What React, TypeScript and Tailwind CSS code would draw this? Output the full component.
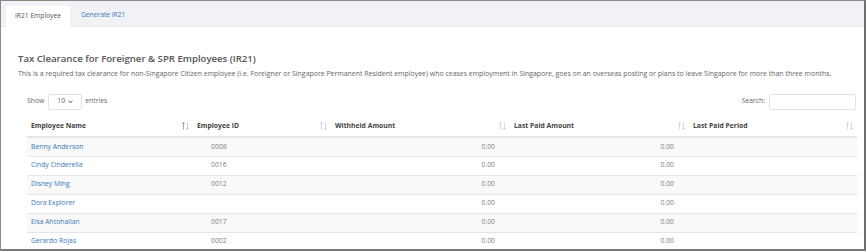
import React from "react";

const rows = [
  { name: "Benny Anderson", id: "0008" },
  { name: "Cindy Cinderella", id: "0016" },
  { name: "Disney Ming", id: "0012" },
  { name: "Dora Explorer", id: "" },
  { name: "Elsa Ahtohallan", id: "0017" },
  { name: "Gerardo Rojas", id: "0002" },
];

function SortIcon({ active }: { active?: boolean }) {
  return (
    <svg width="7" height="8" viewBox="0 0 7 8" className="shrink-0">
      <path d="M1.5 0.5 V7.5 M0.2 2 L1.5 0.5 L2.8 2" stroke={active ? "#9a9a9a" : "#d4d4d4"} strokeWidth="0.9" fill="none" />
      <path d="M5.5 0.5 V7.5 M4.2 6 L5.5 7.5 L6.8 6" stroke={active ? "#c8c8c8" : "#d4d4d4"} strokeWidth="0.9" fill="none" />
    </svg>
  );
}

export default function App() {
  return (
    <div
      className="w-[866px] h-[251px] overflow-hidden bg-white border-l border-t border-[#8a8a8a] border-r-2 border-b-2 border-r-[#6e6e6e] border-b-[#7a7a7a] flex flex-col"
      style={{ fontFamily: "'Open Sans', sans-serif" }}
    >
      <div className="h-[26px] shrink-0 bg-[#f0f2f6] border-b border-[#e6e8ec] flex items-end pl-[5px]">
        <div className="h-[21px] px-[9px] bg-white rounded-t-[2px] flex items-center text-[6.7px] text-[#555] -mb-px">
          IR21 Employee
        </div>
        <div className="h-[21px] px-[11px] flex items-center text-[6.7px] text-[#3a78b8]">
          Generate IR21
        </div>
      </div>
      <div className="pl-[17px] pr-[8px] pt-[24px]">
        <div className="text-[9.6px] font-semibold text-[#555] leading-[16px]">
          Tax Clearance for Foreigner &amp; SPR Employees (IR21)
        </div>
        <div className="text-[6.95px] text-[#666] leading-[10px] mt-[2px] whitespace-nowrap">
          This is a required tax clearance for non-Singapore Citizen employee (i.e. Foreigner or Singapore Permanent Resident employee) who ceases employment in Singapore, goes on an overseas posting or plans to leave Singapore for more than three months.
        </div>
        <div className="pl-[9px] mt-[14px]">
          <div className="flex items-center justify-between h-[17px]">
            <div className="flex items-center text-[6.8px] text-[#666]">
              <span>Show</span>
              <div className="ml-[4px] mr-[3px] w-[34px] h-[16px] border border-[#e2e2e2] rounded-[2px] flex items-center justify-between px-[8px]">
                <span>10</span>
                <svg width="5" height="4" viewBox="0 0 5 4">
                  <path d="M0.6 0.8 L2.5 2.9 L4.4 0.8" stroke="#555" strokeWidth="1" fill="none" />
                </svg>
              </div>
              <span>entries</span>
            </div>
            <div className="flex items-center text-[6.8px] text-[#666]">
              <span>Search:</span>
              <div className="ml-[4px] w-[87px] h-[16px] border border-[#e2e2e2] rounded-[2px]" />
            </div>
          </div>
          <table className="w-[830px] mt-[7px] border-collapse table-fixed text-[6.8px]">
            <colgroup>
              <col className="w-[166px]" />
              <col className="w-[138px]" />
              <col className="w-[179px]" />
              <col className="w-[179px]" />
              <col className="w-[168px]" />
            </colgroup>
            <thead>
              <tr className="h-[20px] border-b-2 border-[#e6e6e6] text-[color:#444444]">
                {["Employee Name", "Employee ID", "Withheld Amount", "Last Paid Amount", "Last Paid Period"].map((h, i) => (
                  <th key={h} className="px-[4px] pb-[1px] text-left font-bold">
                    <div className="flex items-center justify-between">
                      <span>{h}</span>
                      <SortIcon active={i === 0} />
                    </div>
                  </th>
                ))}
              </tr>
            </thead>
            <tbody>
              {rows.map((r, i) => (
                <tr key={r.name} className={i % 2 === 0 ? "h-[19px] border-b border-[#e6e6e6] bg-[#f9f9f9]" : "h-[19px] border-b border-[#e6e6e6] bg-white"}>
                  <td className="px-[4px] text-[color:#3a78b8]">{r.name}</td>
                  <td className="pl-[18px] text-[color:#808080]">{r.id}</td>
                  <td className="pr-[15px] text-right text-[color:#808080]">0.00</td>
                  <td className="pr-[15px] text-right text-[color:#808080]">0.00</td>
                  <td></td>
                </tr>
              ))}
            </tbody>
          </table>
        </div>
      </div>
    </div>
  );
}
